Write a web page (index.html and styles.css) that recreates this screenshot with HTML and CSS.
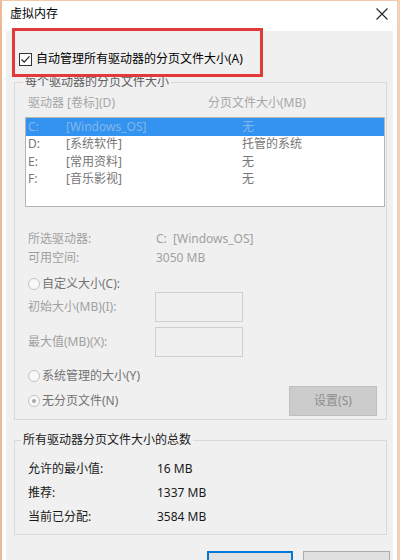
FILE: index.html
```html
<!DOCTYPE html>
<html lang="zh-CN">
<head>
<meta charset="utf-8">
<title>虚拟内存</title>
<link rel="stylesheet" href="styles.css">
</head>
<body>
<div class="window">
  <div class="titlebar">
    <span class="title">虚拟内存</span>
    <svg class="close" width="12" height="12" viewBox="0 0 12 12"><path d="M0.5 0.5 L11.5 11.5 M11.5 0.5 L0.5 11.5" stroke="#222" stroke-width="1.1" fill="none"/></svg>
  </div>
  <div class="client">
    <div class="auto-row">
      <svg class="checkbox" width="13" height="13" viewBox="0 0 13 13"><rect x="0.5" y="0.5" width="12" height="12" fill="#fff" stroke="#333"/><path d="M2.5 6.5 L5.2 9.2 L10.5 3.4" stroke="#222" stroke-width="1.2" fill="none"/></svg>
      <span class="auto-label">自动管理所有驱动器的分页文件大小(A)</span>
    </div>
    <div class="redbox"></div>

    <div class="group g1">
      <div class="gtitle">每个驱动器的分页文件大小</div>
      <div class="hdr"><span class="hcol1">驱动器 [卷标](D)</span><span>分页文件大小(MB)</span></div>
      <div class="listbox">
        <div class="lrow selected"><span class="c1">C:</span><span class="c2">[Windows_OS]</span><span>无</span></div>
        <div class="lrow"><span class="c1">D:</span><span class="c2">[系统软件]</span><span>托管的系统</span></div>
        <div class="lrow"><span class="c1">E:</span><span class="c2">[常用资料]</span><span>无</span></div>
        <div class="lrow"><span class="c1">F:</span><span class="c2">[音乐影视]</span><span>无</span></div>
      </div>
      <div class="info">
        <div class="irow"><span class="ilabel">所选驱动器:</span><span>C:&nbsp; [Windows_OS]</span></div>
        <div class="irow"><span class="ilabel">可用空间:</span><span>3050 MB</span></div>
      </div>
      <div class="radio-row r1"><span class="radio"></span><span class="rtext">自定义大小(C):</span></div>
      <div class="field-row"><span class="flabel">初始大小(MB)(I):</span><span class="input"></span></div>
      <div class="field-row f2"><span class="flabel">最大值(MB)(X):</span><span class="input"></span></div>
      <div class="radio-row r2"><span class="radio"></span><span class="rtext">系统管理的大小(Y)</span></div>
      <div class="last-row">
        <div class="radio-row"><span class="radio checked"></span><span class="rtext">无分页文件(N)</span></div>
        <div class="btn-set">设置(S)</div>
      </div>
    </div>

    <div class="group g2">
      <div class="gtitle dark">所有驱动器分页文件大小的总数</div>
      <div class="totals">
        <div class="trow"><span class="tlabel">允许的最小值:</span><span>16 MB</span></div>
        <div class="trow"><span class="tlabel">推荐:</span><span>1337 MB</span></div>
        <div class="trow"><span class="tlabel">当前已分配:</span><span>3584 MB</span></div>
      </div>
    </div>

    <div class="buttons">
      <div class="btn default"></div>
      <div class="btn"></div>
    </div>
  </div>
</div>
</body>
</html>
```
FILE: styles.css
```css
* { box-sizing: border-box; }
body {
  margin: 0;
  background: #fff;
  font: 12px/16px "Noto Sans", "Noto Sans CJK SC", sans-serif;
  color: #1a1a1a;
}
.window {
  width: 400px;
  height: 560px;
  overflow: hidden;
  background: #fff;
  border-top: 1px solid #f2c9ad;
  border-left: 2px solid #eeb995;
  border-right: 3px solid #f3d0b8;
}
.titlebar {
  height: 30px;
  display: flex;
  justify-content: space-between;
  align-items: flex-start;
  padding: 5px 9px 0 8px;
}
.title { color: #000; }
.close { margin-top: 2px; }
.client {
  position: relative;
  background: #f0f0f0;
  margin: 0 4px;
  height: 529px;
  padding-top: 21px;
}
.auto-row {
  display: flex;
  align-items: center;
  height: 14px;
  padding-left: 13px;
}
.checkbox { display: block; margin-right: 4px; }
.auto-label { color: #000; }
.redbox {
  position: absolute;
  left: 6px;
  top: -3px;
  width: 251px;
  height: 49px;
  border: 3px solid #e2393b;
}
.group {
  margin-left: 8px;
  width: 373px;
  border: 1px solid #d9d9d9;
}
.g1 { margin-top: 16px; padding-bottom: 3px; }
.g2 { margin-top: 20px; padding-bottom: 5px; }
.gtitle {
  margin: -9px 0 0 8px;
  padding: 0 2px;
  width: max-content;
  background: #f0f0f0;
  color: #5e5e5e;
}
.g2 .gtitle { margin-left: 6px; }
.gtitle.dark { color: #1a1a1a; }
.hdr {
  margin-top: 5px;
  padding-left: 13px;
  display: flex;
  color: #a6a6a6;
}
.hcol1 { width: 180px; }
.listbox {
  margin: 6px 0 0 10px;
  width: 360px;
  height: 90px;
  border: 1px solid #b4b4b4;
  background: #fff;
}
.lrow {
  display: flex;
  align-items: center;
  height: 17.5px;
  padding-left: 2px;
  color: #767676;
}
.lrow .c1 { width: 38px; }
.lrow .c2 { width: 176px; }
.lrow.selected { background: #3393f0; color: #84b6ea; }
.info {
  margin-top: 22px;
  padding-left: 13px;
  color: #a0a0a0;
}
.irow { display: flex; line-height: 19px; }
.ilabel { width: 128px; }
.radio-row {
  display: flex;
  align-items: center;
  height: 16px;
  padding-left: 13px;
  color: #737373;
}
.r1 { margin-top: 9px; }
.r2 { margin-top: 11px; }
.radio {
  width: 12px;
  height: 12px;
  border: 1px solid #c4c4c4;
  border-radius: 50%;
  background: #f8f8f8;
  margin-right: 2px;
  display: flex;
  align-items: center;
  justify-content: center;
}
.radio.checked::after {
  content: "";
  width: 4px;
  height: 4px;
  border-radius: 50%;
  background: #a8a8a8;
}
.field-row {
  display: flex;
  align-items: center;
  height: 30px;
  padding-left: 13px;
  color: #a0a0a0;
}
.f2 { margin-top: 5px; }
.flabel { width: 127px; }
.input {
  width: 88px;
  height: 30px;
  border: 1px solid #cfcfcf;
  background: #f0f0f0;
}
.last-row {
  margin-top: 2px;
  height: 30px;
  display: flex;
  align-items: center;
  justify-content: space-between;
  padding-right: 9px;
}
.last-row .radio-row { padding-left: 13px; }
.btn-set {
  width: 88px;
  height: 30px;
  background: #cccccc;
  border: 1px solid #bfbfbf;
  color: #8e8e8e;
  display: flex;
  align-items: center;
  justify-content: center;
}
.totals { margin-top: 9px; padding-left: 13px; }
.trow { display: flex; line-height: 24px; }
.tlabel { width: 129px; }
.buttons {
  margin-top: 16px;
  padding-left: 201px;
  display: flex;
  gap: 10px;
}
.btn {
  width: 87px;
  height: 30px;
  background: #e1e1e1;
  border: 1px solid #adadad;
}
.btn.default { width: 86px; border: 2px solid #0078d7; }
```
